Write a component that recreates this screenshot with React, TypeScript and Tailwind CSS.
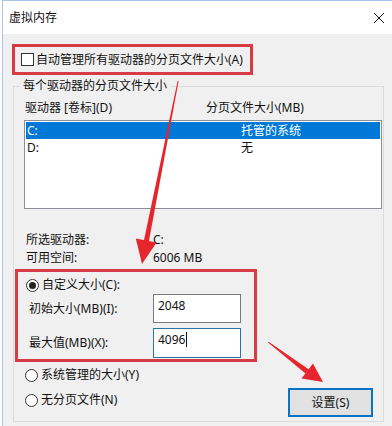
import React from "react";

function CheckBox() {
  return <span className="w-[13px] h-[13px] border border-[#333] bg-white shrink-0" />;
}

function Radio({ checked = false }: { checked?: boolean }) {
  return (
    <span className="w-[13px] h-[13px] rounded-full border border-[#333] bg-white shrink-0 flex items-center justify-center">
      {checked && <span className="w-[7px] h-[7px] rounded-full bg-[#222]" />}
    </span>
  );
}

function Arrows() {
  // red annotation arrows drawn over the dialog
  return (
    <svg className="absolute inset-0 pointer-events-none" width="392" height="426" viewBox="0 0 392 426">
      <polygon points="177.6,81 178.6,81 148.8,242 143.8,241" fill="#e5262d" />
      <polygon points="142,264 135.8,238.5 156.6,242.5" fill="#e5262d" />
      <polygon points="268,342.5 268.6,341.8 309,369.5 305.5,373.5" fill="#e5262d" />
      <polygon points="323,382 301.5,378.5 313,363.5" fill="#e5262d" />
    </svg>
  );
}

export default function App() {
  return (
    <div className="relative w-[392px] h-[426px] bg-white overflow-hidden pl-[2px] text-[12px] leading-[16px] text-[#111] font-['Noto_Sans','Noto_Sans_CJK_SC',sans-serif]">
      <div className="h-full border-l border-t border-[#a9c6e6] flex flex-col">
        <div className="h-[33px] bg-white flex items-center justify-between pl-[6px] pr-[7px] shrink-0">
          <span>虚拟内存</span>
          <svg width="12" height="12" viewBox="0 0 12 12">
            <path d="M1 1 L11 11 M11 1 L1 11" stroke="#111" strokeWidth="1" />
          </svg>
        </div>
        <div className="flex-1 bg-[#f0f0f0] pt-[10px] pl-[9px]">
          <div className="w-[241px] h-[31px] border-[3px] border-[#d83b43] flex items-center gap-[2px] pl-[6px]">
            <CheckBox />
            <span>自动管理所有驱动器的分页文件大小(A)</span>
          </div>

          <fieldset className="mt-[3px] -ml-[-1px] w-[371px] h-[344px] border border-[#dcdcdc] px-0 flex flex-col">
            <legend className="ml-[6px] px-[3px]">每个驱动器的分页文件大小</legend>

            <div className="flex mt-[6px] pl-[11px]">
              <span className="w-[181px]">驱动器 [卷标](D)</span>
              <span>分页文件大小(MB)</span>
            </div>

            <div className="mt-[4px] ml-[10px] w-[358px] h-[89px] border border-[#8c8f95] bg-white p-px">
              <div className="h-[17px] bg-[#0078d7] text-white flex items-center pl-[1px]">
                <span className="w-[214px]">C:</span>
                <span>托管的系统</span>
              </div>
              <div className="h-[17px] flex items-center pl-[1px]">
                <span className="w-[214px]">D:</span>
                <span>无</span>
              </div>
            </div>

            <div className="mt-[22px] pl-[12px] flex flex-col">
              <div className="h-[18px] flex items-center">
                <span className="w-[127px]">所选驱动器:</span>
                <span>C:</span>
              </div>
              <div className="h-[18px] flex items-center">
                <span className="w-[127px]">可用空间:</span>
                <span>6006 MB</span>
              </div>
            </div>

            <div className="mt-[2px] ml-[1px] w-[242px] h-[93px] border-[3px] border-[#d83b43] pt-[4px]">
              <div className="h-[18px] flex items-center gap-[3px] pl-[8px]">
                <Radio checked />
                <span>自定义大小(C):</span>
              </div>
              <div className="flex items-center h-[29px]">
                <span className="w-[135px] pl-[11px]">初始大小(MB)(I):</span>
                <div className="w-[88px] h-[29px] border border-[#7a7a7a] bg-white pl-[4px] pt-[3px]">2048</div>
              </div>
              <div className="flex items-center h-[30px] mt-[5px]">
                <span className="w-[135px] pl-[11px]">最大值(MB)(X):</span>
                <div className="w-[88px] h-[30px] border border-[#2b72a8] bg-white pl-[4px] pt-[3px] flex items-start">
                  <span>4096</span>
                  <span className="w-px h-[15px] bg-[#111] ml-[1px]" />
                </div>
              </div>
            </div>

            <div className="flex justify-between pr-[10px]">
              <div className="flex flex-col pl-[11px]">
                <div className="mt-[4px] h-[18px] flex items-center gap-[3px]">
                  <Radio />
                  <span>系统管理的大小(Y)</span>
                </div>
                <div className="mt-[7px] h-[18px] flex items-center gap-[3px]">
                  <Radio />
                  <span>无分页文件(N)</span>
                </div>
              </div>
              <button className="mt-[26px] w-[85px] h-[29px] bg-[#e1e1e1] border-2 border-[#0a74c4] text-[#111]">
                设置(S)
              </button>
            </div>
          </fieldset>
        </div>
      </div>
      <Arrows />
    </div>
  );
}
